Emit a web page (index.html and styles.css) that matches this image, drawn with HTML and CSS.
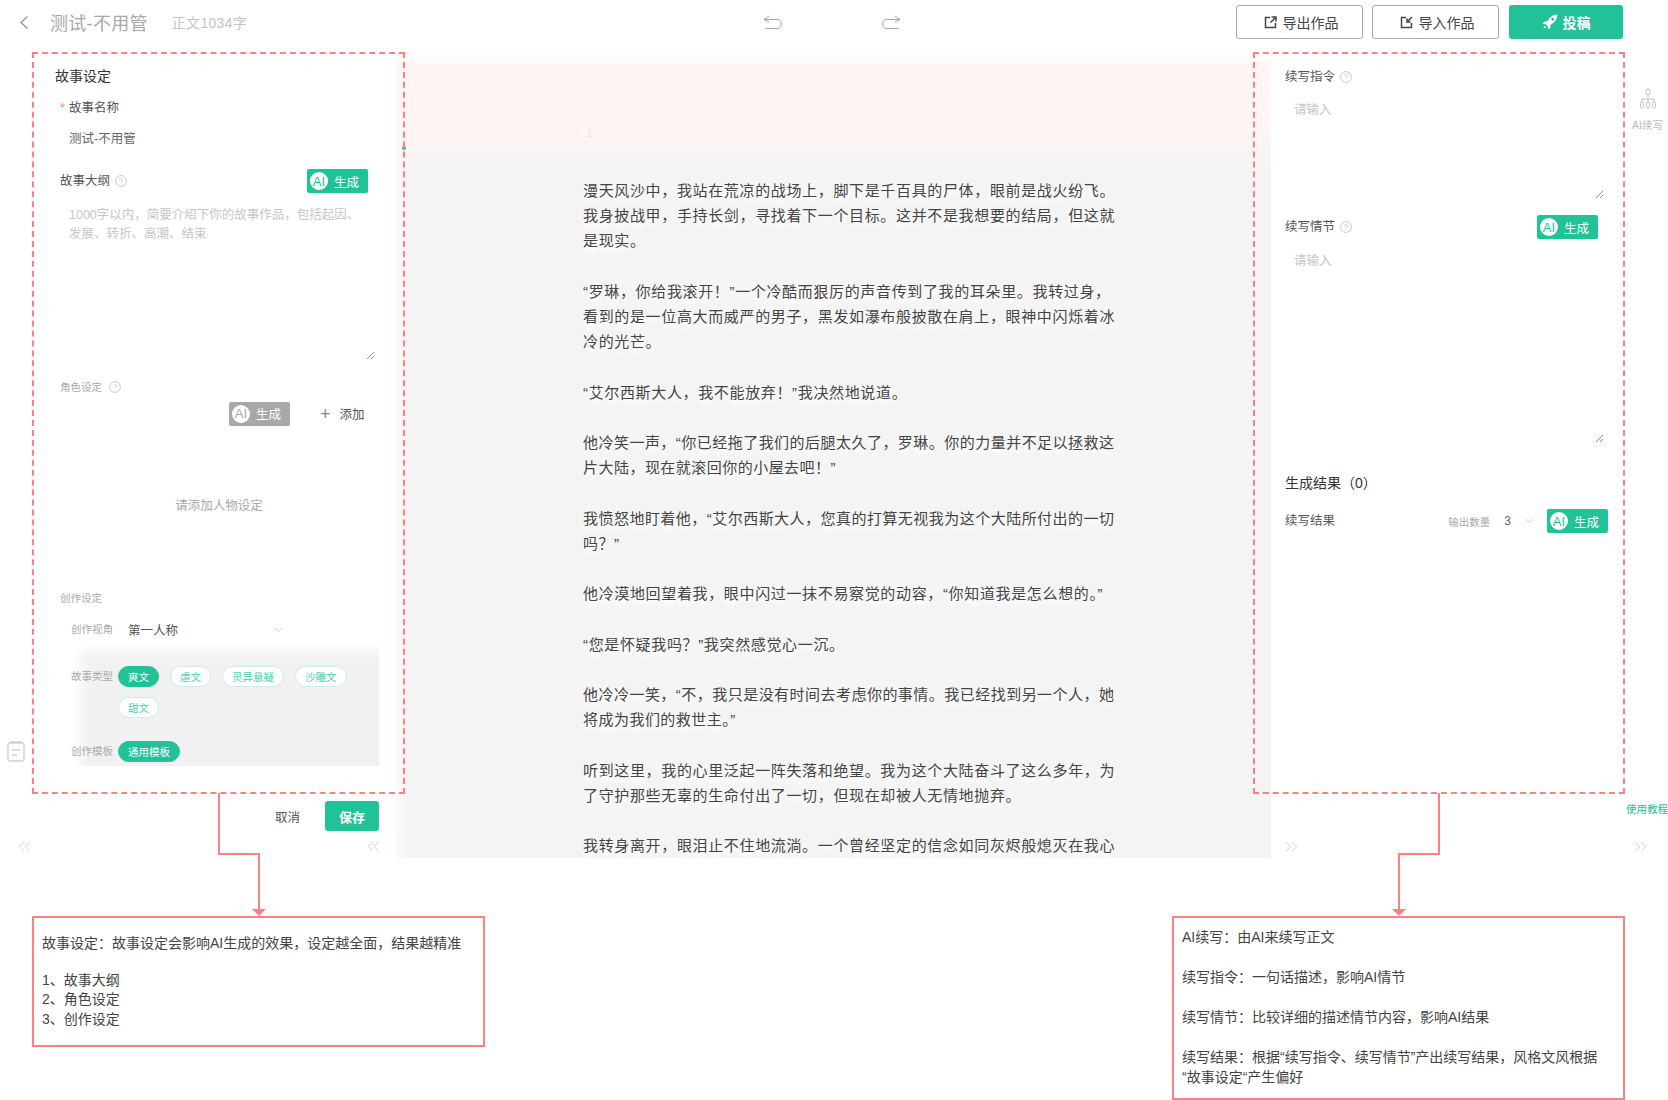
FILE: index.html
```html
<!DOCTYPE html>
<html lang="zh-CN">
<head>
  <meta charset="UTF-8" />
  <title>测试-不用管</title>
  <link rel="stylesheet" href="styles.css">
</head>
<body>
  <svg class="sprite" width="0" height="0">
    <symbol id="i-help" viewBox="0 0 12 12">
      <circle cx="6" cy="6" r="5.4" fill="none" stroke="#bdbdbd" stroke-width="0.8"/>
      <path d="M4.5 4.7a1.5 1.5 0 1 1 2.3 1.3c-.5.3-.8.6-.8 1.2M6 8.6v.6" fill="none" stroke="#bdbdbd" stroke-width="0.8"/>
    </symbol>
    <symbol id="i-resize" viewBox="0 0 9 9">
      <path d="M1 8 8 1M5 8l3-3" fill="none" stroke="#777" stroke-width="0.8"/>
    </symbol>
    <symbol id="i-left" viewBox="0 0 13 11">
      <path d="M6 1 1 5.500 6 10M12 1 7 5.500 12 10" fill="none" stroke="#d4d4d4" stroke-width="1"/>
    </symbol>
    <symbol id="i-right" viewBox="0 0 13 11">
      <path d="M1 1l5 4.500L1 10M7 1l5 4.500L7 10" fill="none" stroke="#d4d4d4" stroke-width="1"/>
    </symbol>
    <symbol id="i-down" viewBox="0 0 9 6">
      <path d="M1 1l3.500 3.500L8 1" fill="none" stroke="#c4c4c4" stroke-width="0.8"/>
    </symbol>
  </svg>

  <div class="app">
    <header class="topbar">
      <div class="topbar-left">
        <svg class="back" width="10" height="15" viewBox="0 0 10 15"><path d="M8.500 1.500 2 7.500l6.500 6" fill="none" stroke="#999" stroke-width="1.400"/></svg>
        <span class="doc-title">测试-不用管</span>
        <span class="doc-count">正文1034字</span>
      </div>
      <div class="topbar-mid">
        <svg width="20" height="15" viewBox="0 0 20 15"><path d="M6 1 1 4.500 6 7M1 4.500h13a4 4 0 0 1 0 9H2" fill="none" stroke="#aaa" stroke-width="1"/></svg>
        <svg width="20" height="15" viewBox="0 0 20 15"><path d="M14 1l5 3.500L14 7M19 4.500H6a4 4 0 0 0 0 9h12" fill="none" stroke="#aaa" stroke-width="1"/></svg>
      </div>
      <div class="topbar-right">
        <button class="btn-line">
          <svg width="13" height="13" viewBox="0 0 13 13"><path d="M6 1.500H1.500v10h10V7M7.500 1h4.500v4.500M12 1 6.500 6.500" fill="none" stroke="#444" stroke-width="1.500"/></svg>
          导出作品
        </button>
        <button class="btn-line">
          <svg width="13" height="13" viewBox="0 0 13 13"><path d="M6 1.500H1.500v10h10V7M12 1 7 6M7 2.500V6h3.500" fill="none" stroke="#444" stroke-width="1.500"/></svg>
          导入作品
        </button>
        <button class="btn-submit">
          <svg width="16" height="16" viewBox="0 0 14 14"><path fill-rule="evenodd" d="M13.500.5C9.500.7 6.500 2.800 4.600 6.300L2 6.700.5 8.800l2.800.1 1.800 1.800.1 2.800 2.100-1.500.4-2.600c3.500-1.900 5.600-4.900 5.800-9.400zM9.500 3.200a1.300 1.300 0 1 1 0 2.600 1.300 1.300 0 0 1 0-2.600zM2.500 10.300 1 13l2.700-1.500z" fill="#fff"/></svg>
          投稿
        </button>
      </div>
    </header>

    <main class="workspace">
      <aside class="story-panel">
        <h2 class="panel-title">故事设定</h2>
        <div class="field-label required">故事名称</div>
        <div class="field-value">测试-不用管</div>

        <div class="label-row outline-row">
          <span class="field-label">故事大纲 <svg class="help" width="12" height="12"><use href="#i-help"/></svg></span>
          <span class="ai-btn"><b class="ai-mark">AI</b>生成</span>
        </div>
        <div class="text-area outline-area">
          1000字以内，简要介绍下你的故事作品，包括起因、发展、转折、高潮、结束
          <svg class="resize" width="9" height="9"><use href="#i-resize"/></svg>
        </div>

        <div class="small-label role-label">角色设定 <svg class="help" width="12" height="12"><use href="#i-help"/></svg></div>
        <div class="role-actions">
          <span class="ai-btn is-off"><b class="ai-mark">AI</b>生成</span>
          <span class="add-link"><i class="plus">+</i>添加</span>
        </div>
        <div class="role-empty">请添加人物设定</div>

        <div class="small-label create-label">创作设定</div>
        <div class="create-box">
          <div class="create-row view-row">
            <span class="create-name">创作视角</span>
            <span class="select">第一人称<svg width="9" height="6"><use href="#i-down"/></svg></span>
          </div>
          <div class="create-row type-row">
            <span class="create-name">故事类型</span>
            <div class="chips">
              <span class="chip on">爽文</span>
              <span class="chip">虐文</span>
              <span class="chip">灵异悬疑</span>
              <span class="chip">沙雕文</span>
              <span class="chip">甜文</span>
            </div>
          </div>
          <div class="create-row tpl-row">
            <span class="create-name">创作模板</span>
            <div class="chips"><span class="chip on">通用模板</span></div>
          </div>
        </div>
        <div class="panel-actions">
          <span class="cancel">取消</span>
          <button class="btn-save">保存</button>
        </div>
        <div class="fold-row">
          <svg width="13" height="11"><use href="#i-left"/></svg>
          <svg width="13" height="11"><use href="#i-left"/></svg>
        </div>
      </aside>

      <section class="editor">
        <div class="editor-text">
          <div class="para-num">1</div>
          <p>漫天风沙中，我站在荒凉的战场上，脚下是千百具的尸体，眼前是战火纷飞。我身披战甲，手持长剑，寻找着下一个目标。这并不是我想要的结局，但这就是现实。</p>
          <p>“罗琳，你给我滚开！”一个冷酷而狠厉的声音传到了我的耳朵里。我转过身，看到的是一位高大而威严的男子，黑发如瀑布般披散在肩上，眼神中闪烁着冰冷的光芒。</p>
          <p>“艾尔西斯大人，我不能放弃！”我决然地说道。</p>
          <p class="tight">他冷笑一声，“你已经拖了我们的后腿太久了，罗琳。你的力量并不足以拯救这片大陆，现在就滚回你的小屋去吧！”</p>
          <p class="tight">我愤怒地盯着他，“艾尔西斯大人，您真的打算无视我为这个大陆所付出的一切吗？”</p>
          <p>他冷漠地回望着我，眼中闪过一抹不易察觉的动容，“你知道我是怎么想的。”</p>
          <p>“您是怀疑我吗？”我突然感觉心一沉。</p>
          <p class="tight">他冷冷一笑，“不，我只是没有时间去考虑你的事情。我已经找到另一个人，她将成为我们的救世主。”</p>
          <p>听到这里，我的心里泛起一阵失落和绝望。我为这个大陆奋斗了这么多年，为了守护那些无辜的生命付出了一切，但现在却被人无情地抛弃。</p>
          <p>我转身离开，眼泪止不住地流淌。一个曾经坚定的信念如同灰烬般熄灭在我心</p>
        </div>
      </section>

      <aside class="write-panel">
        <div class="write-main">
          <div class="field-label">续写指令 <svg class="help" width="12" height="12"><use href="#i-help"/></svg></div>
          <div class="text-area cmd-area">
            请输入
            <svg class="resize" width="9" height="9"><use href="#i-resize"/></svg>
          </div>
          <div class="label-row">
            <span class="field-label">续写情节 <svg class="help" width="12" height="12"><use href="#i-help"/></svg></span>
            <span class="ai-btn"><b class="ai-mark">AI</b>生成</span>
          </div>
          <div class="text-area plot-area">
            请输入
            <svg class="resize" width="9" height="9"><use href="#i-resize"/></svg>
          </div>
          <h2 class="panel-title result-title">生成结果（0）</h2>
          <div class="result-row">
            <span class="field-label">续写结果</span>
            <span class="count-label">输出数量</span>
            <span class="count-value">3</span>
            <svg width="9" height="6"><use href="#i-down"/></svg>
            <span class="ai-btn"><b class="ai-mark">AI</b>生成</span>
          </div>
          <div class="fold-row write-fold">
            <svg width="13" height="11"><use href="#i-right"/></svg>
          </div>
        </div>
        <div class="tool-rail">
          <svg width="18" height="21" viewBox="0 0 18 21"><g fill="none" stroke="#bbb" stroke-width="0.9"><rect x="7" y="1" width="4" height="6" rx="2"/><path d="M9 7v4M3 14v-3h12v3M9 11v3"/><rect x="1.500" y="14" width="3" height="6" rx="1.500"/><rect x="7.500" y="14" width="3" height="6" rx="1.500"/><rect x="13.500" y="14" width="3" height="6" rx="1.500"/></g></svg>
          <span class="rail-name">AI续写</span>
          <span class="rail-help">使用教程</span>
          <svg class="rail-fold" width="13" height="11"><use href="#i-right"/></svg>
        </div>
      </aside>
    </main>

    <svg class="doc-icon" width="18" height="21" viewBox="0 0 18 21"><g fill="none" stroke="#bbb" stroke-width="1"><rect x="1" y="2" width="16" height="18" rx="1.500"/><path d="M3 2V1h12v1M5 9h8M5 14h5"/></g></svg>
    <i class="handle-dot"></i>
  </div>

  <div class="notes">
    <div class="note note-left">
      <p>故事设定：故事设定会影响AI生成的效果，设定越全面，结果越精准</p>
      <p>1、故事大纲<br>2、角色设定<br>3、创作设定</p>
    </div>
    <div class="note note-right">
      <p>AI续写：由AI来续写正文</p>
      <p>续写指令：一句话描述，影响AI情节</p>
      <p>续写情节：比较详细的描述情节内容，影响AI结果</p>
      <p>续写结果：根据“续写指令、续写情节”产出续写结果，风格文风根据“故事设定“产生偏好</p>
    </div>
  </div>

  <!-- 标注层 -->
  <div class="mark mark-left"></div>
  <div class="mark mark-right"></div>
  <svg class="arrows" width="1668" height="1100" viewBox="0 0 1668 1100">
    <g fill="none" stroke="#ff8080" stroke-width="2">
      <path d="M219 793v61h40v56"/>
      <path d="M1439 793v61h-40v56"/>
    </g>
    <path d="M252 909h14l-7 7zM1392 909h14l-7 7z" fill="#ff8080"/>
  </svg>
</body>
</html>
```

FILE: styles.css
```css
* { box-sizing: border-box; }
html, body { margin: 0; height: 1100px; overflow: hidden; }
body {
  position: relative;
  background: #fff;
  color: #333;
  font-family: "Liberation Sans", "Noto Sans CJK SC", sans-serif;
  font-size: 12.5px;
}
.sprite { position: absolute; }
svg { display: block; flex: none; }
p { margin: 0; }
button { font-family: inherit; cursor: pointer; }

.app { position: relative; height: 858px; overflow: hidden; }

/* 顶栏 */
.topbar {
  height: 52px;
  display: grid;
  grid-template-columns: 1fr 142px 1fr;
  align-items: start;
}
.topbar-left { display: flex; align-items: center; height: 44px; padding-left: 19px; }
.doc-title { margin-left: 21px; font-size: 18px; letter-spacing: 0.3px; color: #a8a8a8; }
.doc-count { margin-left: 24px; font-size: 14px; letter-spacing: 0.3px; color: #c4c4c4; }
.topbar-mid { display: flex; justify-content: space-between; align-items: center; height: 44px; padding-right: 4px; }
.topbar-right { display: flex; justify-content: flex-end; gap: 9px; padding: 5px 45px 0 0; }
.btn-line, .btn-submit {
  height: 34px;
  display: flex;
  align-items: center;
  justify-content: center;
  gap: 6px;
  border-radius: 3px;
  font-size: 14px;
}
.btn-line { width: 127px; padding-left: 9px; background: #fff; border: 1px solid #a9a9a9; color: #444; }
.btn-submit { width: 114px; margin-left: 1px; gap: 5px; background: #22c299; border: 0; color: #fff; font-weight: 700; }

/* 三栏 */
.workspace { height: 806px; display: flex; }
.story-panel { width: 395px; padding: 14px 0 0 55px; position: relative; }
.editor {
  flex: 1;
  overflow: hidden;
  background:
    linear-gradient(90deg, #fff 0, #fff6f5 4px, rgba(255,246,245,0) 14px),
    linear-gradient(#fff 0, #fff5f4 14px, #fff5f4 74px, #f4f4f4 125px);
}
.write-panel { width: 397px; display: flex; }

.panel-title { margin: 0; font-size: 14px; font-weight: 400; line-height: 20px; color: #333; }
.field-label { display: inline-flex; align-items: center; gap: 5px; font-size: 12.5px; line-height: 18px; color: #555; }
.small-label { display: flex; align-items: center; gap: 7px; font-size: 10.5px; line-height: 16px; color: #aaa; }
.required { display: block; margin: 13px 0 0 14px; }
.required::before { content: "*"; position: absolute; margin-left: -9px; color: #ff8080; }
.field-value { margin: 13px 0 0 14px; line-height: 18px; color: #666; }
.label-row { display: flex; justify-content: space-between; align-items: center; }
.outline-row { margin: 21px 27px 0 5px; }

.ai-btn {
  width: 61px;
  height: 24px;
  padding-left: 3px;
  display: flex;
  align-items: center;
  gap: 6px;
  background: #22c299;
  border-radius: 2px;
  color: #fff;
  font-size: 12.5px;
}
.ai-mark {
  width: 18px;
  height: 18px;
  display: flex;
  align-items: center;
  justify-content: center;
  background: #fff;
  border-radius: 50%;
  color: #22c299;
  font-size: 13px;
  font-weight: 400;
}
.ai-btn.is-off { background: #a8a8a8; }
.is-off .ai-mark { color: #a8a8a8; }

.text-area { position: relative; color: #c6c6c6; line-height: 19px; }
.resize { position: absolute; right: 0; bottom: 0; }
.outline-area { width: 306px; height: 154px; margin: 13px 0 0 14px; padding-right: 9px; }
.role-label { margin: 19px 0 0 5px; }

.role-actions { display: flex; align-items: center; margin: 6px 0 0 174px; height: 25px; }
.add-link { display: flex; align-items: center; margin-left: 30px; color: #555; }
.plus { margin-right: 9px; font-style: normal; font-size: 18px; font-weight: 300; line-height: 18px; color: #888; }
.role-empty { margin-top: 71px; width: 328px; text-align: center; line-height: 18px; color: #aaa; }

.create-label { margin: 75px 0 0 5px; }
.create-box {
  width: 308px;
  height: 152px;
  margin: 9px 0 0 16px;
  background:
    linear-gradient(#fff 28px, rgba(255,255,255,0) 44px),
    linear-gradient(90deg, #fff 2px, rgba(255,255,255,0) 18px),
    linear-gradient(#f1f1f1, #f1f1f1) 0 0 / 100% 151px no-repeat;
}
.create-row { display: flex; }
.create-name { width: 47px; flex: none; font-size: 10.5px; line-height: 21px; color: #aaa; }
.view-row { height: 29px; align-items: center; }
.select {
  width: 173px;
  margin-left: 1px;
  padding: 0 9px;
  display: flex;
  justify-content: space-between;
  align-items: center;
  color: #555;
}
.type-row { margin-top: 22px; }
.tpl-row { margin-top: 23px; }
.chips { display: flex; flex-wrap: wrap; gap: 10px 11px; width: 240px; }
.chip {
  height: 21px;
  padding: 0 9px;
  display: flex;
  align-items: center;
  justify-content: center;
  background: #fff;
  border: 1px solid #c9efe5;
  border-radius: 11px;
  color: #4dcfac;
  font-size: 10.5px;
}
.chip.on { background: #22c299; border-color: #22c299; color: #fff; }

.panel-actions { display: flex; align-items: center; justify-content: flex-end; margin: 34px 16px 0 0; height: 30px; }
.cancel { margin-right: 25px; color: #555; }
.btn-save {
  width: 54px;
  height: 30px;
  background: #22c299;
  border: 0;
  border-radius: 3px;
  color: #fff;
  font-size: 13px;
  font-weight: 700;
}
.fold-row {
  position: absolute;
  left: 18px;
  right: 15px;
  bottom: 6px;
  display: flex;
  justify-content: space-between;
}

/* 正文 */
.editor-text { width: 540px; margin-left: 188px; padding-top: 68px; }
.para-num { height: 58px; padding-left: 3px; font-size: 12.5px; line-height: 26px; color: #e9e9e9; }
.editor-text p {
  margin-bottom: 25.2px;
  font-size: 15px;
  line-height: 25.2px;
  letter-spacing: 0.65px;
  color: #444;
  text-shadow: 0 3px 4px #fff, 0 5px 5px #fff;
}
.editor-text p.tight { letter-spacing: 0.47px; }

/* 右栏 */
.write-main { position: relative; flex: 1; padding: 16px 0 0 14px; }
.cmd-area { width: 319px; height: 105px; margin-top: 8px; padding: 7px 0 0 9px; }
.plot-area { width: 319px; height: 196px; margin-top: 8px; padding: 5px 0 0 9px; }
.write-main .label-row { width: 313px; margin-top: 16px; height: 24px; }
.result-title { margin-top: 30px; }
.result-row { display: flex; align-items: center; margin-top: 16px; width: 323px; }
.count-label { margin-left: auto; font-size: 10.5px; color: #aaa; }
.count-value { margin: 0 14px 0 14px; font-size: 12px; color: #666; }
.result-row .ai-btn { margin-left: 13px; }
.write-fold { left: 14px; right: auto; }
.tool-rail { position: relative; width: 43px; display: flex; flex-direction: column; align-items: center; padding: 36px 0 0 2px; }
.rail-name { margin-top: 8px; font-size: 10.5px; white-space: nowrap; color: #bbb; }
.rail-help { position: absolute; top: 749px; left: 1px; font-size: 10.5px; white-space: nowrap; color: #22c299; }
.rail-fold { position: absolute; left: 9px; bottom: 6px; }

/* 标注 */
.doc-icon { position: absolute; left: 7px; top: 741px; }
.handle-dot { position: absolute; left: 402px; top: 146px; width: 4px; height: 4px; border-radius: 50%; background: #22c299; }
.notes { display: flex; justify-content: space-between; align-items: flex-start; padding: 58px 43px 0 32px; }
.note { width: 453px; border: 2px solid #ff8080; font-size: 14px; line-height: 19.6px; color: #444; }
.note-left { height: 131px; padding: 16px 8px; }
.note-left p + p { margin-top: 17px; }
.note-right { height: 184px; padding: 10px 8px; }
.note-right p + p { margin-top: 20.400px; }
.mark { position: absolute; top: 52px; height: 742px; border: 2px dashed #ff8080; }
.mark-left { left: 32px; width: 373px; }
.mark-right { left: 1253px; width: 372px; }
.arrows { position: absolute; left: 0; top: 0; pointer-events: none; }
```
